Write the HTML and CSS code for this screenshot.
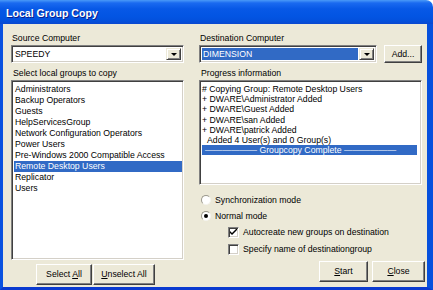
FILE: index.html
```html
<!DOCTYPE html>
<html>
<head>
	<meta charset="UTF-8">
	<title>Local Group Copy</title>
	<link rel="stylesheet" href="styles.css">
</head>
<body>
<div class="window">
    <div class="titlebar">Local Group Copy</div>
    <div class="frame">
        <div class="col">
            <div class="lbl">Source Computer</div>
            <div class="combo">
                <div class="combo-text">SPEEDY</div>
                <div class="combo-btn"><span class="arrow"></span></div>
            </div>
            <div class="lbl lbl2">Select local groups to copy</div>
            <ul class="listbox groups">
                <li>Administrators</li>
                <li>Backup Operators</li>
                <li>Guests</li>
                <li>HelpServicesGroup</li>
                <li>Network Configuration Operators</li>
                <li>Power Users</li>
                <li>Pre-Windows 2000 Compatible Access</li>
                <li class="select">Remote Desktop Users</li>
                <li>Replicator</li>
                <li>Users</li>
            </ul>
            <div class="btnrow center">
                <div class="btn w-sel">Select <u>A</u>ll</div>
                <div class="btn w-unsel"><u>U</u>nselect All</div>
            </div>
        </div>

        <div class="col">
            <div class="lbl">Destination Computer</div>
            <div class="dest-row">
                <div class="combo dest">
                    <div class="combo-text"><span class="hl">DIMENSION</span></div>
                    <div class="combo-btn"><span class="arrow"></span></div>
                </div>
                <div class="btn w-add">Add...</div>
            </div>
            <div class="lbl lbl2">Progress information</div>
            <ul class="listbox progress">
                <li># Copying Group: Remote Desktop Users</li>
                <li>+ DWARE\Administrator Added</li>
                <li>+ DWARE\Guest Added</li>
                <li>+ DWARE\san Added</li>
                <li>+ DWARE\patrick Added</li>
                <li class="indent">Added 4 User(s) and 0 Group(s)</li>
                <li class="select">&mdash;&mdash;&mdash;&mdash;&mdash;&mdash; Groupcopy Complete &mdash;&mdash;&mdash;&mdash;&mdash;&mdash;</li>
            </ul>

            <div class="opt first"><span class="radio"></span>Synchronization mode</div>
            <div class="opt"><span class="radio on"></span>Normal mode</div>
            <div class="opt sub"><span class="check">
                <svg width="7" height="7" viewBox="0 0 7 7"><path d="M0 2 L0 4 L2 6 L7 1 L7 -1 L2 4 Z" fill="#000"/></svg>
            </span>Autocreate new groups on destination</div>
            <div class="opt sub sub2"><span class="check"></span>Specify name of destinationgroup</div>

            <div class="btnrow right">
                <div class="btn w-start"><u>S</u>tart</div>
                <div class="btn w-close"><u>C</u>lose</div>
            </div>
        </div>
    </div>
</div>
</body>
</html>
```

FILE: styles.css
```css
body{
    margin: 0;
    background: #fff;
}
.window{
    width: 433px;
    height: 290px;
    display: flex;
    flex-direction: column;
    font-family: "Liberation Sans", Arial, sans-serif;
    font-size: 8.7px;
    color: #000;
}
.titlebar{
    height: 24px;
    line-height: 26px;
    padding-left: 6px;
    color: #fff;
    font-weight: bold;
    font-size: 10.6px;
    text-shadow: 1px 1px #0a1e8c;
    border-top-right-radius: 7px;
    background: linear-gradient(#4a9af8 0, #1a6af0 3px, #0758e6 9px, #0355e3 16px, #0350dc 21px, #0a48cf 24px);
}
.frame{
    flex: 1;
    display: grid;
    grid-template-columns: 173px 223px;
    column-gap: 15px;
    padding: 7px 0 0 8px;
    background: #ece9d8;
    border-left: 3px solid #0a52e0;
    border-right: 6px solid #0650dd;
    border-bottom: 3px solid #0a3ad0;
}
.col{
    display: flex;
    flex-direction: column;
}
.lbl{
    height: 14px;
    line-height: 14px;
    padding-left: 1px;
}
.lbl2{
    margin-top: 3px;
    padding-left: 2px;
}
.combo{
    height: 18px;
    box-sizing: border-box;
    display: flex;
    background: #fff;
    border-top: 1px solid #808080;
    border-left: 1px solid #808080;
    border-right: 1px solid #fff;
    border-bottom: 1px solid #fff;
    box-shadow: inset 1px 1px #404040, inset -1px -1px #d4d0c8;
    padding: 2px;
}
.combo-text{
    flex: 1;
    line-height: 12px;
    padding-left: 1px;
}
.combo-btn{
    width: 15px;
    box-sizing: border-box;
    background: #ece9d8;
    border-top: 1px solid #ece9d8;
    border-left: 1px solid #ece9d8;
    border-right: 1px solid #404040;
    border-bottom: 1px solid #404040;
    box-shadow: inset 1px 1px #fff, inset -1px -1px #808080;
    display: flex;
    align-items: center;
    justify-content: center;
}
.arrow{
    width: 0;
    height: 0;
    border-left: 3px solid transparent;
    border-right: 3px solid transparent;
    border-top: 3px solid #000;
}
.dest-row{
    display: flex;
    gap: 7px;
}
.dest{
    width: 178px;
}
.hl{
    display: block;
    margin-left: -1px;
    padding-left: 1px;
    margin-right: 1px;
    background: #316ac5;
    color: #fff;
}
.listbox{
    margin: 0;
    padding: 3px 1px 0 2px;
    list-style: none;
    background: #fff;
    box-sizing: border-box;
    border-top: 1px solid #808080;
    border-left: 1px solid #808080;
    border-right: 1px solid #fff;
    border-bottom: 1px solid #fff;
    box-shadow: inset 1px 1px #404040, inset -1px -1px #d4d0c8;
}
.groups{
    height: 180px;
}
.groups li{
    height: 11px;
    line-height: 11px;
    padding-left: 1px;
}
.progress{
    height: 105px;
    padding-top: 3px;
}
.progress li{
    height: 10.2px;
    line-height: 10.2px;
    white-space: nowrap;
    padding-left: 0;
    margin-right: 3px;
}
.progress .indent{
    padding-left: 5px;
}
.progress .select{
    text-align: center;
    padding-right: 18px;
}
.select{
    background-color: #316ac5;
    color: #fff;
}
.btnrow{
    display: flex;
    gap: 1px;
}
.center{
    margin-top: 4px;
    padding-left: 25px;
}
.right{
    margin-top: 5px;
    justify-content: flex-end;
    margin-right: -3px;
    gap: 4px;
}
.btn{
    height: 21px;
    line-height: 19px;
    box-sizing: border-box;
    text-align: center;
    background: #ece9d8;
    border-top: 1px solid #fff;
    border-left: 1px solid #fff;
    border-right: 1px solid #404040;
    border-bottom: 1px solid #404040;
    box-shadow: inset -1px -1px #808080;
}
.w-sel{ width: 56px; }
.w-unsel{ width: 62px; }
.w-add{ width: 38px; height: 18px; line-height: 16px; }
.w-start{ width: 49px; }
.w-close{ width: 53px; }
.opt{
    height: 14px;
    display: flex;
    align-items: center;
    gap: 4px;
    margin-top: 2px;
    padding-left: 2px;
}
.first{
    margin-top: 8px;
}
.sub{
    padding-left: 29px;
}
.sub2{
    margin-top: 3px;
}
.radio{
    width: 10px;
    height: 10px;
    box-sizing: border-box;
    border-radius: 50%;
    background: #fff;
    border: 1px solid;
    border-color: #9a988c #f4f3ee #f4f3ee #9a988c;
    display: flex;
    align-items: center;
    justify-content: center;
}
.radio.on::after{
    content: "";
    width: 4px;
    height: 4px;
    border-radius: 50%;
    background: #000;
}
.check{
    width: 11px;
    height: 11px;
    box-sizing: border-box;
    background: #fff;
    border-top: 1px solid #808080;
    border-left: 1px solid #808080;
    border-right: 1px solid #fff;
    border-bottom: 1px solid #fff;
    box-shadow: inset 1px 1px #404040, inset -1px -1px #d4d0c8;
    display: flex;
    align-items: center;
    justify-content: center;
}
.check svg{
    display: block;
}
```
